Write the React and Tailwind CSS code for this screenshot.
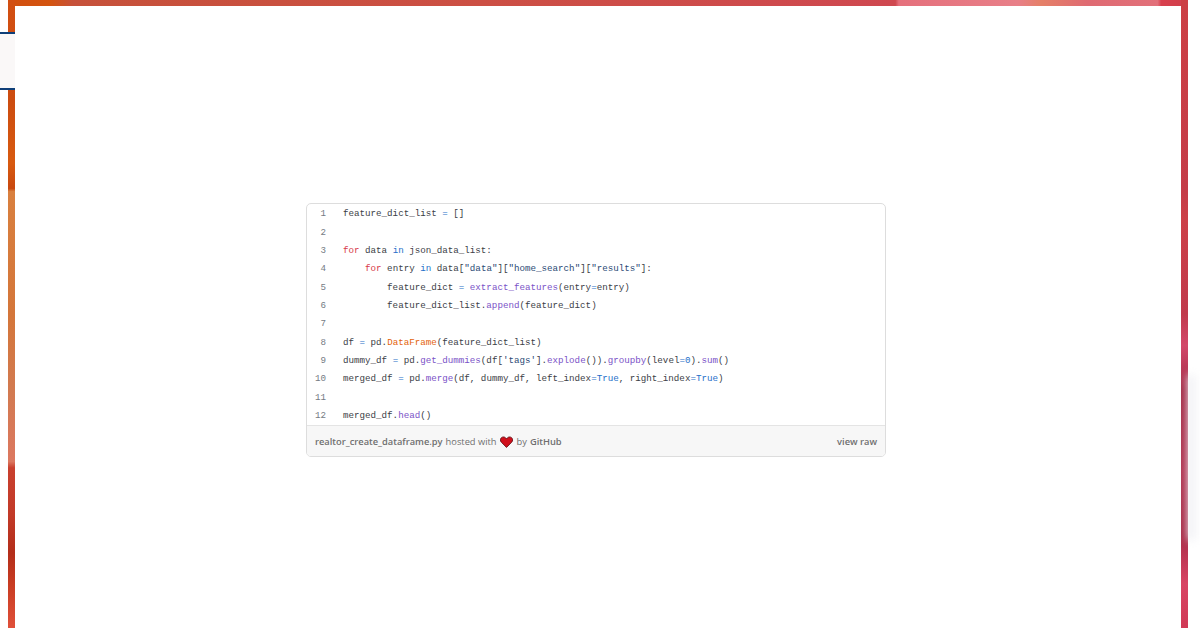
const K = ({ children }) => <span className="text-[#d73a49]">{children}</span>;
const B = ({ children }) => <span className="text-[#1f6fc9]">{children}</span>;
const P = ({ children }) => <span className="text-[#7a52c7]">{children}</span>;
const O = ({ children }) => <span className="text-[#e36209]">{children}</span>;
const S = ({ children }) => <span className="text-[#2b4a75]">{children}</span>;

const lines = [
  <>feature_dict_list <B>=</B> []</>,
  null,
  <><K>for</K> data <B>in</B> json_data_list:</>,
  <>    <K>for</K> entry <B>in</B> data[<S>"data"</S>][<S>"home_search"</S>][<S>"results"</S>]:</>,
  <>        feature_dict <B>=</B> <P>extract_features</P>(entry<B>=</B>entry)</>,
  <>        feature_dict_list.<P>append</P>(feature_dict)</>,
  null,
  <>df <B>=</B> pd.<O>DataFrame</O>(feature_dict_list)</>,
  <>dummy_df <B>=</B> pd.<P>get_dummies</P>(df[<S>'tags'</S>].<P>explode</P>()).<P>groupby</P>(level<B>=</B><B>0</B>).<P>sum</P>()</>,
  <>merged_df <B>=</B> pd.<P>merge</P>(df, dummy_df, left_index<B>=</B><B>True</B>, right_index<B>=</B><B>True</B>)</>,
  null,
  <>merged_df.<P>head</P>()</>,
];

function GistEmbed() {
  return (
    <div className="ml-[291px] w-[580px] overflow-hidden rounded-[5px] border border-[#dddddd] bg-white">
      <div className="h-[222px] pt-[1px] font-['Liberation_Mono',monospace] text-[9.2px] text-[#3b4046]">
        {lines.map((line, i) => (
          <div key={i} className="flex h-[18.35px] items-center">
            <div className="w-[19px] shrink-0 text-right text-[#747b84]">{i + 1}</div>
            <pre className="ml-[17px] font-['Liberation_Mono',monospace]">{line}</pre>
          </div>
        ))}
      </div>
      <div className="-mt-[1px] flex h-[31px] items-center justify-between border-t border-[#e4e4e4] bg-[#f7f7f7] px-[8px] pt-[1px] font-['Open_Sans',sans-serif] text-[9.3px] text-[#6f6f6f]">
        <div className="flex items-center">
          <span className="font-semibold">realtor_create_dataframe.py</span>
          <span className="ml-[3px]">hosted with</span>
          <svg viewBox="0 0 24 22" className="ml-[3px] mr-[4px] h-[12px] w-[13px]">
            <path d="M12 21 2.500 11.500C0 9 .2 5 2.600 3 5 1 8.500 1.300 10.500 3.500L12 5l1.500-1.500C15.500 1.300 19 1 21.400 3c2.400 2 2.600 6 .1 8.500z" fill="#d0101c" stroke="#5a0a10" strokeWidth="1.500" />
          </svg>
          <span>by</span>
          <span className="ml-[3px] font-semibold">GitHub</span>
        </div>
        <span className="font-semibold">view raw</span>
      </div>
    </div>
  );
}

export default function App() {
  return (
    <div className="relative flex h-[628px] w-[1200px] overflow-hidden bg-white pl-[8px] pr-[12px]">
      <div className="w-[7px] shrink-0 bg-[linear-gradient(to_bottom,#d24f12_0%,#cc4c10_16%,#d85a10_26%,#c8480f_30%,#d9803f_30.500%,#d4763a_50%,#d27a50_62%,#dc7860_73.500%,#c9402e_74.500%,#c23a28_82%,#b32e1a_88%,#c83c22_93%,#e0503a_100%)]" />
      <div className="flex min-w-0 flex-1 flex-col">
        <div className="h-[6px] shrink-0 bg-[linear-gradient(to_right,#d2500f_0%,#d4540f_3%,#c6513a_5%,#cc4f44_40%,#cf4850_75.500%,#e5707c_75.800%,#e87f88_86%,#e58068_88%,#df6a72_92%,#e2707a_98%,#d8404e_98.300%,#d2404c_100%)]" />
        <div className="flex-1 bg-white pt-[197px]">
          <GistEmbed />
        </div>
      </div>
      <div className="w-[7px] shrink-0 bg-[linear-gradient(to_bottom,#cc3f44_0%,#c43c48_30%,#cc4048_35%,#c03a4c_50%,#d2486a_55%,#a42c48_62%,#b03250_75%,#a82c48_85%,#d84464_93%,#d03a56_100%)]" />

      {/* bit of the slide behind that shows at the left edge */}
      <div className="absolute left-0 top-[32px] h-[58px] w-[15px] border-y-2 border-[#0f3f78] bg-[#faf8f8]" />
      <div className="absolute left-[1188px] top-[375px] h-[165px] w-[10px] bg-gradient-to-r from-[#e8e8ee] to-white blur-[4px]" />
    </div>
  );
}
